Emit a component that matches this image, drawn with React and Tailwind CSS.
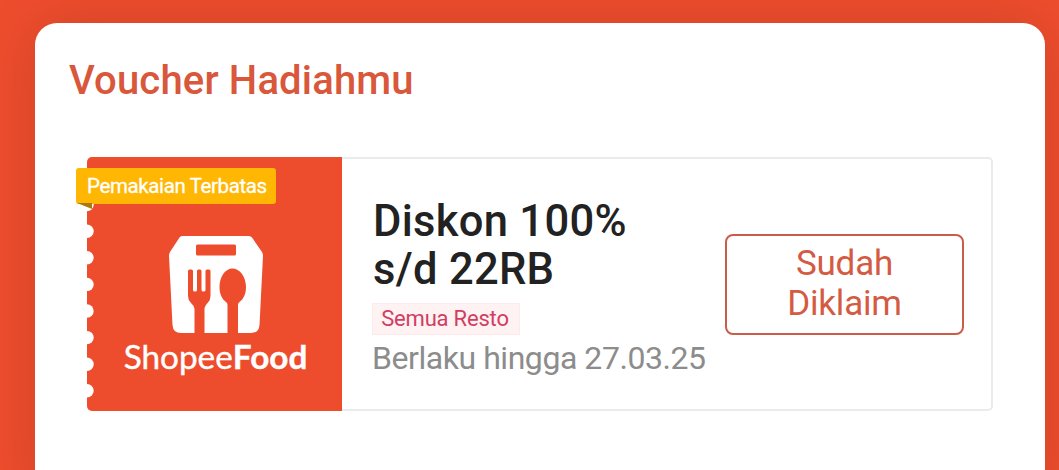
const notches = [47.5, 74.2, 100.8, 127.4, 154, 180.6, 207.2, 233.8]

function BagIcon() {
  return (
    <svg className="ml-[3px] w-[94px] h-[97px]" viewBox="0 0 94 97" fill="none">
      <path d="M13 0H80Q82 0 83 1.5L93 16Q94 18 94 20L90.500 89Q90 97 82 97H12Q4 97 3.500 89L0 20Q0 18 1 16L10.500 1.500Q11.500 0 13 0Z" fill="#fff" />
      <rect x="27" y="8.500" width="40" height="11" rx="1.500" fill="#ee4d2d" />
      <path d="M19 35Q19 33.500 20.500 33.500H22.500Q24 33.500 24 35V54Q24 55.500 26 55.500T28 54V35Q28 33.500 29.500 33.500H31Q32.500 33.500 32.500 35V54Q32.500 55.500 34.500 55.500T36.500 54V35Q36.500 33.500 38 33.500H40Q41.500 33.500 41.500 35V60Q41.500 64 39 66.500Q35.500 70 35.500 73V97H25.500V73Q25.500 70 22 67Q19 64 19 60Z" fill="#ee4d2d" />
      <path d="M63.500 32.500C70.500 32.500 77 40.500 77 51C77 58 74.500 63 70.500 66Q69 67 69 69V97H58.500V69Q58.500 67 57 66C53 63 50.500 58 50.500 51C50.500 40.500 56.500 32.500 63.500 32.500Z" fill="#ee4d2d" />
    </svg>
  )
}

function LimitedRibbon() {
  return (
    <div className="absolute left-[-11px] top-[11px]">
      <div className="w-[200px] h-[36px] pl-[11px] rounded-[3px] bg-[#ffb703] text-white text-[20.5px] leading-[36px] tracking-[-0.38px] [-webkit-text-stroke:0.3px_white] whitespace-nowrap">
        Pemakaian Terbatas
      </div>
      <svg className="block -mt-px ml-px w-[15px] h-[6px]" viewBox="0 0 15 6">
        <path d="M0 0H15V6Z" fill="#a87a10" />
      </svg>
    </div>
  )
}

function Brand() {
  return (
    <div className="relative w-[255px] shrink-0 bg-[#ee4d2d] rounded-l-[5px] flex flex-col items-center pt-[79px]">
      <svg className="absolute left-[-1px] top-0 w-[9px] h-[254px]" viewBox="0 0 9 254">
        {notches.map((y) => (
          <circle key={y} cx="1" cy={y} r="6.700" fill="#fff" />
        ))}
      </svg>
      <BagIcon />
      <div className="mt-[3px] pl-[2px] font-['Lato'] text-[33.3px] leading-[40px] text-white whitespace-nowrap [-webkit-text-stroke:0.4px_white]">
        Shopee<span className="font-bold">Food</span>
      </div>
      <LimitedRibbon />
    </div>
  )
}

export default function App() {
  return (
    <main className="h-[470px] overflow-hidden bg-[#ee4d2d] pt-[23px] pl-[35px] pr-[14px] font-['Roboto',sans-serif]">
      <section className="h-[480px] rounded-[22px] bg-white shadow-[0_0_60px_rgba(0,0,0,0.13)] pt-[34px] pl-[34px]">
        <h1 className="text-[40px] leading-[48px] tracking-[0.17px] font-medium text-[#d9573b] whitespace-nowrap">Voucher Hadiahmu</h1>

        <div className="mt-[52px] ml-[18px] w-[906px] h-[254px] flex">
          <Brand />
          <div className="flex-1 flex items-start border-2 border-l-0 border-[#ebebeb] rounded-r-[5px] pl-[31px]">
            <div className="w-[352px] pt-[39px]">
              <h2 className="text-[43.5px] leading-[48px] tracking-[0.3px] font-medium text-[#222222] whitespace-nowrap">
                Diskon 100%
                <br />
                s/d 22RB
              </h2>
              <div className="mt-[9px] -ml-px w-[148px] h-[32px] flex items-center justify-center border border-[#fdeaea] bg-[#fff2f2] text-[22px] leading-[30px] tracking-[-0.2px] pr-[2px] text-[#d13e63] whitespace-nowrap">
                Semua Resto
              </div>
              <p className="mt-[4px] -ml-px text-[32px] leading-[38px] tracking-[-0.45px] text-[#8c8c8c] whitespace-nowrap">Berlaku hingga 27.03.25</p>
            </div>
            <button className="mt-[75px] w-[239px] h-[101px] pb-px border-2 border-[#cb5d48] rounded-[8px] text-[35px] leading-[40px] tracking-[-0.2px] text-[#d45b43]">
              Sudah
              <br />
              Diklaim
            </button>
          </div>
        </div>
      </section>
    </main>
  )
}
